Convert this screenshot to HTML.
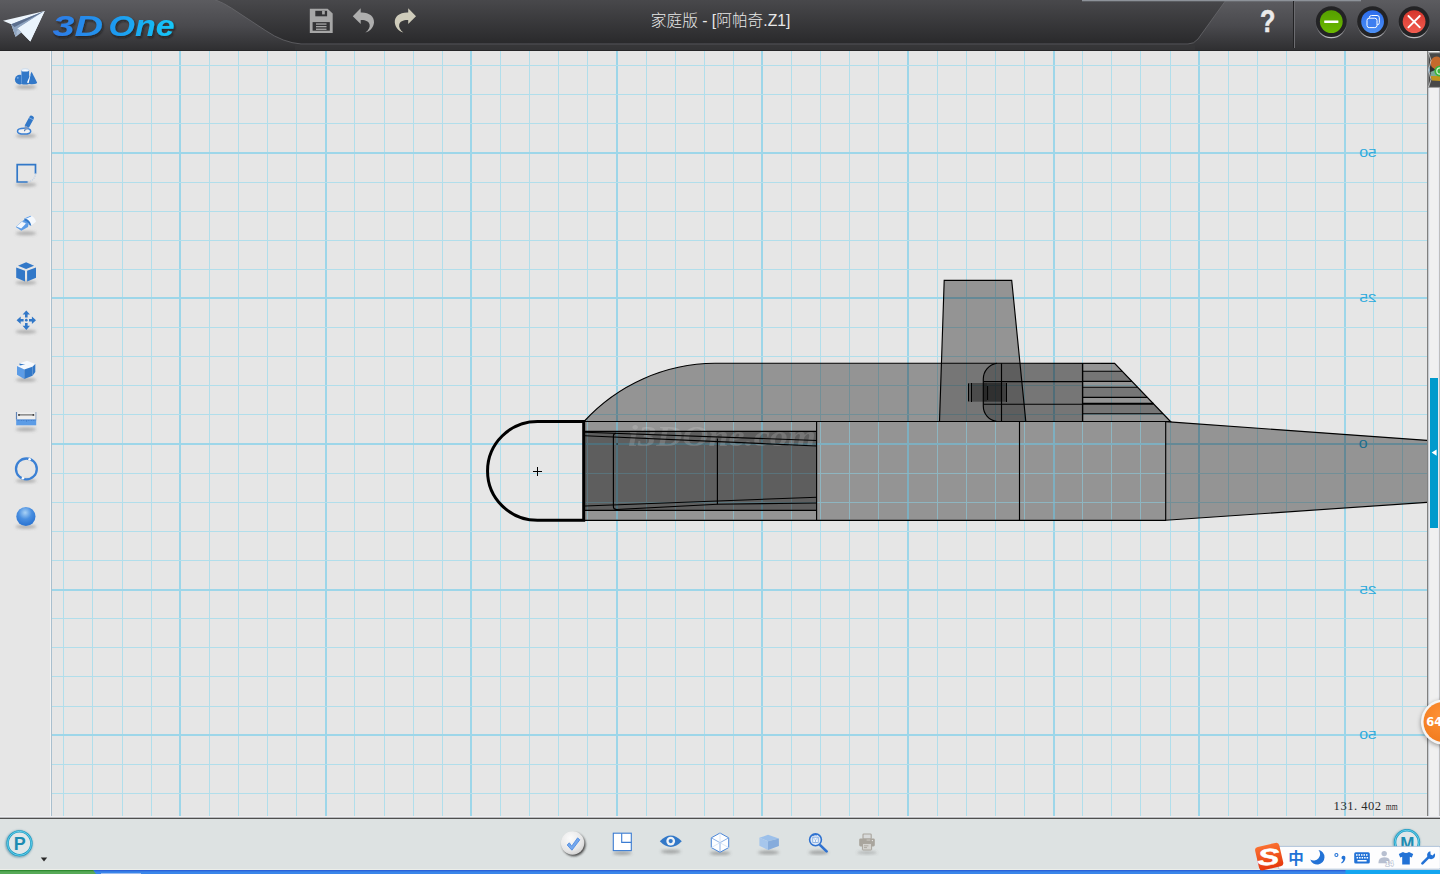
<!DOCTYPE html>
<html lang="zh">
<head>
<meta charset="utf-8">
<title>家庭版 - [阿帕奇.Z1]</title>
<style>
html,body{margin:0;padding:0;background:#e6e6e6;}
body{width:1440px;height:874px;overflow:hidden;position:relative;
font-family:"Liberation Sans","Noto Sans CJK SC",sans-serif;}
svg{position:absolute;left:0;top:0;display:block}
text{white-space:pre}
</style>
</head>
<body>
<svg width="1440" height="874" viewBox="0 0 1440 874">
<defs>
<linearGradient id="gTab" x1="0" y1="0" x2="0" y2="1">
 <stop offset="0" stop-color="#5c5c60"/><stop offset="0.5" stop-color="#4a4a4e"/><stop offset="1" stop-color="#2e2e30"/>
</linearGradient>
<linearGradient id="gMid" x1="0" y1="0" x2="0" y2="1">
 <stop offset="0" stop-color="#49494c"/><stop offset="1" stop-color="#29292b"/>
</linearGradient>
<linearGradient id="gLogo" gradientUnits="userSpaceOnUse" x1="53" y1="0" x2="175" y2="0">
 <stop offset="0" stop-color="#2f7be6"/><stop offset="0.5" stop-color="#1f9af0"/><stop offset="1" stop-color="#12c8f8"/>
</linearGradient>
<filter id="blur1" x="-50%" y="-50%" width="200%" height="200%"><feGaussianBlur stdDeviation="1"/></filter>
<filter id="blurW" x="-20%" y="-50%" width="140%" height="200%"><feGaussianBlur stdDeviation="0.7"/></filter>
<filter id="blur15" x="-50%" y="-50%" width="200%" height="200%"><feGaussianBlur stdDeviation="1.5"/></filter>
<filter id="blur2" x="-50%" y="-50%" width="200%" height="200%"><feGaussianBlur stdDeviation="2"/></filter>
<filter id="blur3" x="-50%" y="-50%" width="200%" height="200%"><feGaussianBlur stdDeviation="3"/></filter>
<clipPath id="clipCanvas"><rect x="52" y="51" width="1375" height="765"/></clipPath>
</defs>
<rect x="0" y="0" width="1440" height="874" fill="#e6e6e6"/>
<g clip-path="url(#clipCanvas)" shape-rendering="crispEdges">
<rect x="5" y="51" width="1" height="765" fill="#b1deeb"/>
<rect x="34" y="51" width="2" height="765" fill="#9dd6e9"/>
<rect x="63" y="51" width="1" height="765" fill="#b1deeb"/>
<rect x="92" y="51" width="1" height="765" fill="#b1deeb"/>
<rect x="122" y="51" width="1" height="765" fill="#b1deeb"/>
<rect x="151" y="51" width="1" height="765" fill="#b1deeb"/>
<rect x="179" y="51" width="2" height="765" fill="#9dd6e9"/>
<rect x="209" y="51" width="1" height="765" fill="#b1deeb"/>
<rect x="238" y="51" width="1" height="765" fill="#b1deeb"/>
<rect x="267" y="51" width="1" height="765" fill="#b1deeb"/>
<rect x="296" y="51" width="1" height="765" fill="#b1deeb"/>
<rect x="325" y="51" width="2" height="765" fill="#9dd6e9"/>
<rect x="354" y="51" width="1" height="765" fill="#b1deeb"/>
<rect x="384" y="51" width="1" height="765" fill="#b1deeb"/>
<rect x="413" y="51" width="1" height="765" fill="#b1deeb"/>
<rect x="442" y="51" width="1" height="765" fill="#b1deeb"/>
<rect x="470" y="51" width="2" height="765" fill="#9dd6e9"/>
<rect x="500" y="51" width="1" height="765" fill="#b1deeb"/>
<rect x="529" y="51" width="1" height="765" fill="#b1deeb"/>
<rect x="558" y="51" width="1" height="765" fill="#b1deeb"/>
<rect x="587" y="51" width="1" height="765" fill="#b1deeb"/>
<rect x="616" y="51" width="2" height="765" fill="#9dd6e9"/>
<rect x="646" y="51" width="1" height="765" fill="#b1deeb"/>
<rect x="675" y="51" width="1" height="765" fill="#b1deeb"/>
<rect x="704" y="51" width="1" height="765" fill="#b1deeb"/>
<rect x="733" y="51" width="1" height="765" fill="#b1deeb"/>
<rect x="761" y="51" width="2" height="765" fill="#9dd6e9"/>
<rect x="791" y="51" width="1" height="765" fill="#b1deeb"/>
<rect x="820" y="51" width="1" height="765" fill="#b1deeb"/>
<rect x="849" y="51" width="1" height="765" fill="#b1deeb"/>
<rect x="878" y="51" width="1" height="765" fill="#b1deeb"/>
<rect x="907" y="51" width="2" height="765" fill="#9dd6e9"/>
<rect x="937" y="51" width="1" height="765" fill="#b1deeb"/>
<rect x="966" y="51" width="1" height="765" fill="#b1deeb"/>
<rect x="995" y="51" width="1" height="765" fill="#b1deeb"/>
<rect x="1024" y="51" width="1" height="765" fill="#b1deeb"/>
<rect x="1053" y="51" width="2" height="765" fill="#9dd6e9"/>
<rect x="1082" y="51" width="1" height="765" fill="#b1deeb"/>
<rect x="1111" y="51" width="1" height="765" fill="#b1deeb"/>
<rect x="1140" y="51" width="1" height="765" fill="#b1deeb"/>
<rect x="1170" y="51" width="1" height="765" fill="#b1deeb"/>
<rect x="1198" y="51" width="2" height="765" fill="#9dd6e9"/>
<rect x="1228" y="51" width="1" height="765" fill="#b1deeb"/>
<rect x="1257" y="51" width="1" height="765" fill="#b1deeb"/>
<rect x="1286" y="51" width="1" height="765" fill="#b1deeb"/>
<rect x="1315" y="51" width="1" height="765" fill="#b1deeb"/>
<rect x="1344" y="51" width="2" height="765" fill="#9dd6e9"/>
<rect x="1373" y="51" width="1" height="765" fill="#b1deeb"/>
<rect x="1402" y="51" width="1" height="765" fill="#b1deeb"/>
<rect x="52" y="6" width="1375.5" height="2" fill="#9dd6e9"/>
<rect x="52" y="36" width="1375.5" height="1" fill="#b1deeb"/>
<rect x="52" y="65" width="1375.5" height="1" fill="#b1deeb"/>
<rect x="52" y="94" width="1375.5" height="1" fill="#b1deeb"/>
<rect x="52" y="123" width="1375.5" height="1" fill="#b1deeb"/>
<rect x="52" y="152" width="1375.5" height="2" fill="#9dd6e9"/>
<rect x="52" y="182" width="1375.5" height="1" fill="#b1deeb"/>
<rect x="52" y="211" width="1375.5" height="1" fill="#b1deeb"/>
<rect x="52" y="240" width="1375.5" height="1" fill="#b1deeb"/>
<rect x="52" y="269" width="1375.5" height="1" fill="#b1deeb"/>
<rect x="52" y="297" width="1375.5" height="2" fill="#9dd6e9"/>
<rect x="52" y="327" width="1375.5" height="1" fill="#b1deeb"/>
<rect x="52" y="356" width="1375.5" height="1" fill="#b1deeb"/>
<rect x="52" y="385" width="1375.5" height="1" fill="#b1deeb"/>
<rect x="52" y="414" width="1375.5" height="1" fill="#b1deeb"/>
<rect x="52" y="443" width="1375.5" height="2" fill="#9dd6e9"/>
<rect x="52" y="473" width="1375.5" height="1" fill="#b1deeb"/>
<rect x="52" y="502" width="1375.5" height="1" fill="#b1deeb"/>
<rect x="52" y="531" width="1375.5" height="1" fill="#b1deeb"/>
<rect x="52" y="560" width="1375.5" height="1" fill="#b1deeb"/>
<rect x="52" y="589" width="1375.5" height="2" fill="#9dd6e9"/>
<rect x="52" y="618" width="1375.5" height="1" fill="#b1deeb"/>
<rect x="52" y="647" width="1375.5" height="1" fill="#b1deeb"/>
<rect x="52" y="676" width="1375.5" height="1" fill="#b1deeb"/>
<rect x="52" y="706" width="1375.5" height="1" fill="#b1deeb"/>
<rect x="52" y="734" width="1375.5" height="2" fill="#9dd6e9"/>
<rect x="52" y="764" width="1375.5" height="1" fill="#b1deeb"/>
<rect x="52" y="793" width="1375.5" height="1" fill="#b1deeb"/>
</g>
<text transform="translate(1376.6,157) scale(-1.27,0.9)" x="0" y="0" font-family="'Liberation Sans',sans-serif" font-size="12.3" fill="#2aa9dc">50</text>
<text transform="translate(1376.6,302.1) scale(-1.27,0.9)" x="0" y="0" font-family="'Liberation Sans',sans-serif" font-size="12.3" fill="#2aa9dc">25</text>
<text transform="translate(1367.6,448) scale(-1.27,0.9)" x="0" y="0" font-family="'Liberation Sans',sans-serif" font-size="12.3" fill="#2aa9dc">0</text>
<text transform="translate(1376.6,594) scale(-1.27,0.9)" x="0" y="0" font-family="'Liberation Sans',sans-serif" font-size="12.3" fill="#2aa9dc">25</text>
<text transform="translate(1376.6,739.1) scale(-1.27,0.9)" x="0" y="0" font-family="'Liberation Sans',sans-serif" font-size="12.3" fill="#2aa9dc">50</text>
<g clip-path="url(#clipCanvas)">
<path d="M584,421.5 A179,179 0 0 1 715,363.3 L1114.6,363.3 L1170.5,421.5 Z" fill="#000" fill-opacity="0.357"/>
<polygon points="944.2,280.3 1011.7,280.3 1019.9,363.3 941.5,363.3" fill="#000" fill-opacity="0.357"/>
<polygon points="941.5,363.3 1019.9,363.3 1025.8,421.5 939.5,421.5" fill="#000" fill-opacity="0.2"/>
<path d="M997,363.3 C989,364.5 983.3,371 983.3,379 L983.3,406 C983.3,414 989,420.5 997,421.5 L1082.6,421.5 L1082.6,363.3 Z" fill="#000" fill-opacity="0.2"/>
<polygon points="1082.6,371.2 1122.2,371.2 1131.9,381.3 1082.6,381.3" fill="#000" fill-opacity="0.2"/>
<polygon points="1082.6,387.2 1137.6,387.2 1147.3,397.3 1082.6,397.3" fill="#000" fill-opacity="0.2"/>
<polygon points="1082.6,403.8 1153.5,403.8 1163.0,413.7 1082.6,413.7" fill="#000" fill-opacity="0.2"/>
<rect x="968.5" y="383" width="3" height="18.7" fill="#000" fill-opacity="0.277"/>
<rect x="971.5" y="383" width="11.9" height="18.7" fill="#000" fill-opacity="0.36"/>
<rect x="983.4" y="383" width="4.2" height="18.7" fill="#000" fill-opacity="0.558"/>
<rect x="987.6" y="383" width="13.9" height="18.7" fill="#000" fill-opacity="0.49"/>
<rect x="1001.5" y="383" width="5" height="18.7" fill="#000" fill-opacity="0.33"/>
<rect x="585" y="421.5" width="580.7" height="98.8" fill="#000" fill-opacity="0.357"/>
<g shape-rendering="crispEdges"><clipPath id="clipB"><rect x="585.5" y="422" width="579.7" height="97.8"/></clipPath><g clip-path="url(#clipB)">
<rect x="529" y="410" width="1" height="120" fill="#8eb5c0"/>
<rect x="558" y="410" width="1" height="120" fill="#8eb5c0"/>
<rect x="587" y="410" width="1" height="120" fill="#8eb5c0"/>
<rect x="616" y="410" width="2" height="120" fill="#7eafc0"/>
<rect x="646" y="410" width="1" height="120" fill="#8eb5c0"/>
<rect x="675" y="410" width="1" height="120" fill="#8eb5c0"/>
<rect x="704" y="410" width="1" height="120" fill="#8eb5c0"/>
<rect x="733" y="410" width="1" height="120" fill="#8eb5c0"/>
<rect x="761" y="410" width="2" height="120" fill="#7eafc0"/>
<rect x="791" y="410" width="1" height="120" fill="#8eb5c0"/>
<rect x="820" y="410" width="1" height="120" fill="#8eb5c0"/>
<rect x="849" y="410" width="1" height="120" fill="#8eb5c0"/>
<rect x="878" y="410" width="1" height="120" fill="#8eb5c0"/>
<rect x="907" y="410" width="2" height="120" fill="#7eafc0"/>
<rect x="937" y="410" width="1" height="120" fill="#8eb5c0"/>
<rect x="966" y="410" width="1" height="120" fill="#8eb5c0"/>
<rect x="995" y="410" width="1" height="120" fill="#8eb5c0"/>
<rect x="1024" y="410" width="1" height="120" fill="#8eb5c0"/>
<rect x="1053" y="410" width="2" height="120" fill="#7eafc0"/>
<rect x="1082" y="410" width="1" height="120" fill="#8eb5c0"/>
<rect x="1111" y="410" width="1" height="120" fill="#8eb5c0"/>
<rect x="1140" y="410" width="1" height="120" fill="#8eb5c0"/>
<rect x="1170" y="410" width="1" height="120" fill="#8eb5c0"/>
<rect x="570" y="356" width="610" height="1" fill="#8eb5c0"/>
<rect x="570" y="385" width="610" height="1" fill="#8eb5c0"/>
<rect x="570" y="414" width="610" height="1" fill="#8eb5c0"/>
<rect x="570" y="443" width="610" height="2" fill="#7eafc0"/>
<rect x="570" y="473" width="610" height="1" fill="#8eb5c0"/>
<rect x="570" y="502" width="610" height="1" fill="#8eb5c0"/>
<rect x="570" y="531" width="610" height="1" fill="#8eb5c0"/>
</g></g>
<rect x="585" y="431.3" width="231.6" height="79" fill="#000" fill-opacity="0.362"/>
<polygon points="1165.7,421.6 1428,440.37 1428,502.23 1165.7,520.3" fill="#000" fill-opacity="0.357"/>
<text x="628" y="446" font-family="'Liberation Serif',serif" font-style="italic" font-weight="bold" font-size="29" fill="#fff" fill-opacity="0.15" filter="url(#blurW)" textLength="188" lengthAdjust="spacingAndGlyphs">i3DOne.com</text>
<path d="M584,421.5 A179,179 0 0 1 715,363.3 L1114.6,363.3 L1170.5,421.5 Z" fill="none" stroke="#000" stroke-width="1.15"/>
<line x1="585" y1="421.5" x2="1170.5" y2="421.5" stroke="#000" stroke-width="1.15"/>
<line x1="585" y1="520.3" x2="1166" y2="520.3" stroke="#000" stroke-width="1.15"/>
<line x1="816.6" y1="421.5" x2="816.6" y2="520.3" stroke="#000" stroke-width="1.15"/>
<line x1="1019.5" y1="421.5" x2="1019.5" y2="520.3" stroke="#000" stroke-width="1.15"/>
<line x1="1165.7" y1="421.5" x2="1165.7" y2="520.3" stroke="#000" stroke-width="1.15"/>
<line x1="585" y1="431.3" x2="817" y2="431.3" stroke="#000" stroke-width="1.15"/>
<line x1="585" y1="510.3" x2="817" y2="510.3" stroke="#000" stroke-width="1.15"/>
<line x1="1165.7" y1="421.6" x2="1428" y2="440.37156525066973" stroke="#000" stroke-width="1.15"/>
<line x1="1165.7" y1="520.3" x2="1428" y2="502.23111366245695" stroke="#000" stroke-width="1.15"/>
<polyline points="939.5,421.5 944.2,280.3 1011.7,280.3 1025.8,421.5" fill="none" stroke="#000" stroke-width="1.15"/>
<path d="M997,363.3 C989,364.5 983.3,371 983.3,379 L983.3,406 C983.3,414 989,420.5 997,421.5" fill="none" stroke="#000" stroke-width="1.15"/>
<line x1="1001.5" y1="363.3" x2="1001.5" y2="421.5" stroke="#000" stroke-width="1.15"/>
<line x1="983.5" y1="381.6" x2="1082.6" y2="381.6" stroke="#000" stroke-width="1.15"/>
<line x1="983.5" y1="404.2" x2="1082.6" y2="404.2" stroke="#000" stroke-width="1.15"/>
<line x1="1082.6" y1="363.3" x2="1082.6" y2="421.5" stroke="#000" stroke-width="1.4"/>
<line x1="1082.6" y1="371.2" x2="1122.187800687285" y2="371.2" stroke="#000" stroke-width="1.15"/>
<line x1="1082.6" y1="381.3" x2="1131.8886597938144" y2="381.3" stroke="#000" stroke-width="1.15"/>
<line x1="1082.6" y1="387.2" x2="1137.5554982817869" y2="387.2" stroke="#000" stroke-width="1.15"/>
<line x1="1082.6" y1="397.3" x2="1147.256357388316" y2="397.3" stroke="#000" stroke-width="1.15"/>
<line x1="1082.6" y1="403.8" x2="1153.4994845360825" y2="403.8" stroke="#000" stroke-width="2"/>
<line x1="1082.6" y1="413.7" x2="1163.0082474226804" y2="413.7" stroke="#000" stroke-width="1.15"/>
<line x1="968.5" y1="383.4" x2="968.5" y2="401.4" stroke="#000" stroke-width="1.0"/>
<line x1="971.5" y1="383" x2="971.5" y2="402" stroke="#000" stroke-width="1.0"/>
<line x1="987.6" y1="386" x2="987.6" y2="400" stroke="#000" stroke-width="1.0"/>
<line x1="1006.5" y1="383" x2="1006.5" y2="402" stroke="#000" stroke-width="1.0"/>
<path d="M616,433.2 Q613.4,433.4 613.4,436 L613.4,506.6 Q613.4,509.6 616.5,509.4" fill="none" stroke="#000" stroke-width="1.15"/>
<line x1="585" y1="432.2" x2="817" y2="440.5" stroke="#000" stroke-width="1.15"/>
<line x1="585" y1="435.8" x2="817" y2="446" stroke="#000" stroke-width="1.15"/>
<line x1="585" y1="506" x2="817" y2="497.2" stroke="#000" stroke-width="1.15"/>
<polyline points="616,509.5 717.5,504.2 817,503" fill="none" stroke="#000" stroke-width="1.15"/>
<line x1="717.4" y1="438.5" x2="717.4" y2="504.2" stroke="#000" stroke-width="1.15"/>
<rect x="616.6" y="443.4" width="1" height="1.2" fill="#000"/>
<path d="M583.7,421.5 L537.5,421.5 A50,49.4 0 0 0 537.5,520.3 L583.7,520.3 Z" fill="none" stroke="#000" stroke-width="3" stroke-linejoin="miter"/>
<rect x="533" y="471" width="9" height="1" fill="#000"/><rect x="537" y="467" width="1" height="9" fill="#000"/>
</g>
<rect x="1427" y="51" width="13" height="766" fill="#f0f0f0"/>
<rect x="1427" y="51" width="1" height="766" fill="#808080"/>
<rect x="1428" y="51" width="1" height="766" fill="#c8ccd0"/>
<rect x="1429" y="51" width="1" height="766" fill="#e9ebf0"/>
<rect x="1438" y="51" width="1" height="766" fill="#e9ebf0"/>
<rect x="1439" y="51" width="1" height="766" fill="#bebebe"/>
<rect x="1428.4" y="52.6" width="11.6" height="35" fill="#484848"/>
<path d="M1428.4,52.8 L1440,52.8 M1428.4,87.4 L1440,87.4" stroke="#a8a8a8" stroke-width="0.8"/>
<ellipse cx="1436.5" cy="63" rx="6" ry="6.5" fill="#c46a2c"/>
<path d="M1430,66 L1436,70 L1430,74 Z" fill="#303030"/>
<path d="M1430.5,72 L1440,68 L1440,77 L1431,76 Z" fill="#7aa898"/>
<path d="M1430.5,76 L1440,76 L1440,81 L1432,80.5 Z" fill="#c0941e"/>
<path d="M1428.6,66 L1430,70 L1428.6,74 Z" fill="#7ab4dc"/>
<circle cx="1440" cy="71" r="5.6" fill="#3cb43c"/><circle cx="1440" cy="71" r="3.2" fill="none" stroke="#d8f4d8" stroke-width="1.2"/>
<path d="M1428.6,53 L1431,60.5 L1428.6,70 L1431,79.5 L1428.6,87" fill="none" stroke="#e8e8e8" stroke-width="0.7"/>
<rect x="1430" y="378" width="8" height="150" fill="#009acc"/>
<path d="M1431.6,452.6 L1436.6,449.4 L1436.6,455.8 Z" fill="#fff"/>
<circle cx="1443.6" cy="723.5" r="23" fill="#000" fill-opacity="0.35" filter="url(#blur2)"/>
<circle cx="1443.5" cy="722" r="22.6" fill="#f4f4f4"/>
<radialGradient id="gOr" cx="0.45" cy="0.35" r="0.7"><stop offset="0" stop-color="#ff9136"/><stop offset="1" stop-color="#f07a1c"/></radialGradient>
<circle cx="1443.5" cy="722" r="20" fill="url(#gOr)"/>
<text x="1426.2" y="726.4" font-family="'DejaVu Sans','Liberation Sans',sans-serif" font-weight="bold" font-size="11.5" fill="#fff">64</text>
<text x="1333.6" y="810.4" font-family="'Liberation Serif','Noto Serif CJK SC',serif" font-size="12.6" fill="#2a2a2a" textLength="47.5" lengthAdjust="spacing">131. 402</text>
<text x="1385.8" y="810.2" font-family="'Liberation Serif','Noto Serif CJK SC',serif" font-size="9.5" fill="#2a2a2a" textLength="11.8" lengthAdjust="spacingAndGlyphs">mm</text>
<rect x="0" y="50" width="51" height="767" fill="#e6e6e6"/>
<rect x="50" y="51" width="1" height="765" fill="#f3f3f3"/>
<rect x="51" y="51" width="1" height="765" fill="#a9bfce"/>
<ellipse cx="26" cy="87" rx="10.5" ry="2.0" fill="#666" fill-opacity="0.42" filter="url(#blur15)"/>
<circle cx="19.8" cy="79.6" r="4.9" fill="#3278c8"/>
<circle cx="17.8" cy="77.8" r="0.9" fill="#7fb0ea"/>
<path d="M21.3,70.2 L21.3,83.2 A3.9,1.3 0 0 0 29.1,83.2 L29.1,70.2 Z" fill="#3278c8"/>
<ellipse cx="25.2" cy="70.2" rx="3.9" ry="1.35" fill="#fafcff" stroke="#9fc0e6" stroke-width="0.5"/>
<rect x="21.1" y="71" width="0.5" height="12.6" fill="#8db6e8"/>
<path d="M31.6,71.8 L37.1,82.6 A5.2,1.6 0 0 1 26.7,82.6 Z" fill="#3278c8"/>
<path d="M30.9,73.4 L27.0,82.4 L28.6,83.3 Z" fill="#fff"/>
<ellipse cx="26" cy="135.8" rx="10.5" ry="2.0" fill="#666" fill-opacity="0.42" filter="url(#blur15)"/>
<ellipse cx="24.1" cy="131.2" rx="6.6" ry="2.9" fill="#f2f2f2" stroke="#3b80d4" stroke-width="1.5"/>
<g transform="translate(24.1,131.6) rotate(28.5)"><path d="M0,0 L-2.2,-5.6 L2.2,-5.6 Z" fill="#7a98c2"/><path d="M-0.6,-1.6 L0,0 L0.6,-1.6Z" fill="#2f62a8"/><path d="M-2.4,-5.6 L-2.4,-15.6 Q-2.4,-17.8 0,-17.8 Q2.4,-17.8 2.4,-15.6 L2.4,-5.6 Z" fill="#3278c8"/><rect x="-2.4" y="-15" width="4.8" height="0.8" fill="#9cc0ec" fill-opacity="0.8"/></g>
<ellipse cx="26" cy="184.7" rx="10.5" ry="2.0" fill="#666" fill-opacity="0.42" filter="url(#blur15)"/>
<path d="M35.5,172.8 L35.5,164.6 L17.2,164.6 L17.2,182 L26.8,182" fill="none" stroke="#3278c8" stroke-width="1.7" stroke-linejoin="miter" stroke-linecap="square"/>
<path d="M35.5,173.4 A8.8,8.8 0 0 1 27,182" fill="none" stroke="#c4d2e4" stroke-width="1.3" stroke-dasharray="1.2,1"/>
<ellipse cx="26" cy="233.3" rx="10.5" ry="2.0" fill="#666" fill-opacity="0.42" filter="url(#blur15)"/>
<path d="M15.8,227.1 L21.6,221.4 L28.5,224 L28,227 L21.3,230.8 Z" fill="#5c9ce6"/>
<path d="M22,221.2 L24.6,219.6 L28.6,222.4 L28.5,224.4 Z" fill="#5c9ce6"/>
<path d="M16.4,226.6 L21.8,221.8 L26,223.6 L21.2,228.6 Z" fill="#f4f8fd"/>
<path d="M24.2,218.4 L30.5,215.8 C33.5,216.4 35.6,219 36,221.8 L31.2,225.6 C30.6,222 28.2,219.2 24.2,218.4 Z" fill="#f4f8fd"/>
<path d="M24.2,218.4 L30.5,215.8 L31.4,216.2 L26.6,218.6 Z" fill="#5c9ce6"/>
<path d="M24.2,218.4 C28.4,219 30.8,222 31.3,225.7 L29.6,225.2 C28.6,223 27,221.4 24.6,220.6 Z" fill="#3278c8"/>
<ellipse cx="26" cy="282.7" rx="10.5" ry="2.0" fill="#666" fill-opacity="0.42" filter="url(#blur15)"/>
<polygon points="26.1,262.2 34.1,265.8 26.1,268.9 18,265.8" fill="#3278c8"/>
<polygon points="16.2,267.5 25,270.8 25,281.4 16.2,277.7" fill="#3278c8"/>
<polygon points="27.1,270.8 36,267.5 36,277.7 27.1,281.4" fill="#3278c8"/>
<ellipse cx="26" cy="331.7" rx="10.5" ry="2.0" fill="#666" fill-opacity="0.42" filter="url(#blur15)"/>
<path d="M0,-9.7 L3.7,-5.6 L1.3,-5.6 L1.3,-2.7 L-1.3,-2.7 L-1.3,-5.6 L-3.7,-5.6 Z" transform="translate(26.3,320.2) rotate(0)" fill="#3278c8"/>
<path d="M0,-9.7 L3.7,-5.6 L1.3,-5.6 L1.3,-2.7 L-1.3,-2.7 L-1.3,-5.6 L-3.7,-5.6 Z" transform="translate(26.3,320.2) rotate(90)" fill="#3278c8"/>
<path d="M0,-9.7 L3.7,-5.6 L1.3,-5.6 L1.3,-2.7 L-1.3,-2.7 L-1.3,-5.6 L-3.7,-5.6 Z" transform="translate(26.3,320.2) rotate(180)" fill="#3278c8"/>
<path d="M0,-9.7 L3.7,-5.6 L1.3,-5.6 L1.3,-2.7 L-1.3,-2.7 L-1.3,-5.6 L-3.7,-5.6 Z" transform="translate(26.3,320.2) rotate(270)" fill="#3278c8"/>
<circle cx="26.3" cy="320.2" r="1.35" fill="#3278c8"/>
<ellipse cx="26" cy="379.8" rx="10.5" ry="2.0" fill="#666" fill-opacity="0.42" filter="url(#blur15)"/>
<polygon points="19.3,363.4 27,360.7 35.3,364 32.5,366.8 25.2,364.7" fill="#f6f9fd"/>
<polygon points="19.3,363.4 25.2,364.7 20,366.6" fill="#3278c8"/>
<polygon points="32.5,366.8 35.3,364 35.3,372 32.5,375.7" fill="#3278c8"/>
<polygon points="17,366.1 25.2,364.6 32.5,366.8 24.3,369.4" fill="#f6f9fd"/>
<polygon points="17,366.1 24.3,369.4 24.3,378.9 17,374.8" fill="#5c9ce6"/>
<polygon points="24.3,369.4 32.5,366.8 32.5,375.7 24.3,378.9" fill="#3278c8"/>
<ellipse cx="26" cy="429.3" rx="10.5" ry="2.0" fill="#666" fill-opacity="0.42" filter="url(#blur15)"/>
<rect x="16.6" y="412.6" width="19.2" height="7.2" fill="#efefef"/>
<rect x="15.9" y="412" width="1.2" height="7.6" fill="#5f84b6"/>
<rect x="35.2" y="412" width="1.4" height="7.6" fill="#aab9cd"/>
<rect x="18.4" y="414.4" width="15.6" height="1.0" fill="#555"/><circle cx="19" cy="414.9" r="0.95" fill="#3c3c3c"/><circle cx="33.4" cy="414.9" r="0.95" fill="#3c3c3c"/>
<rect x="16.2" y="419.6" width="20" height="5.7" fill="#5c9ce6"/>
<rect x="16.2" y="419.6" width="20" height="0.8" fill="#4a86d2"/>
<rect x="18.5" y="420" width="0.6" height="1" fill="#3e78c4"/>
<rect x="21" y="420" width="0.6" height="1" fill="#3e78c4"/>
<rect x="23.5" y="420" width="0.6" height="1" fill="#3e78c4"/>
<rect x="28.5" y="420" width="0.6" height="1" fill="#3e78c4"/>
<rect x="31" y="420" width="0.6" height="1" fill="#3e78c4"/>
<rect x="33.5" y="420" width="0.6" height="1" fill="#3e78c4"/>
<rect x="26" y="420" width="0.7" height="1.8" fill="#3e78c4"/>
<ellipse cx="26" cy="480.8" rx="10.5" ry="2.0" fill="#666" fill-opacity="0.42" filter="url(#blur15)"/>
<circle cx="26.4" cy="468.9" r="10.4" fill="none" stroke="#3b80d4" stroke-width="2.3"/>
<circle cx="29.6" cy="459.3" r="1.3" fill="#fff"/><circle cx="22.9" cy="478.3" r="1.3" fill="#fff"/>
<ellipse cx="26" cy="526.7" rx="10.5" ry="2.0" fill="#666" fill-opacity="0.42" filter="url(#blur15)"/>
<radialGradient id="gSph" cx="0.46" cy="0.3" r="0.62"><stop offset="0" stop-color="#a9d2f6"/><stop offset="0.55" stop-color="#4a8fe0"/><stop offset="1" stop-color="#2f78d4"/></radialGradient>
<circle cx="25.9" cy="516.5" r="9.6" fill="url(#gSph)"/>
<rect x="0" y="0" width="1440" height="51" fill="url(#gTab)"/>
<path d="M213.5,-1 Q224,3 231.5,8.1 L265.8,30.7 Q283,42.5 301,44 L1188,44 Q1194,44 1198,39 L1226,0 Z" fill="url(#gMid)"/>
<path d="M213.5,-1 Q224,3 231.5,8.1 L265.8,30.7 Q283,42.5 301,44 L1188,44 Q1194,44 1198,39 L1226,0" fill="none" stroke="#6a6a6e" stroke-width="1" stroke-opacity="0.75"/>
<rect x="295" y="44.5" width="900" height="6" fill="#38383a" fill-opacity="0.55"/>
<rect x="0" y="50" width="1440" height="1" fill="#262628"/>
<rect x="1082" y="0" width="279" height="1.3" fill="#8d9299"/>
<path d="M3,20.8 L44.7,11.1 L30.3,41.6 L17.6,28.6 L15.6,37 L11.2,24.2 Z" fill="#eef6fd"/>
<path d="M11.2,24.2 L44.7,11.1 L17.6,28.6 L15.6,37 Z" fill="#8ea4c0"/>
<path d="M11.2,24.2 L44.7,11.1 L14.6,27 Z" fill="#5c6f8e"/>
<path d="M17.6,28.6 L44.7,11.1 L30.3,41.6 Z" fill="#eaf4fd"/>
<path d="M15.6,37 L17.6,28.6 L21.4,32.4 Z" fill="#a9bcd4"/>
<filter id="logoSh" x="-10%" y="-20%" width="125%" height="150%"><feDropShadow dx="1.2" dy="1.8" stdDeviation="0.9" flood-color="#121214" flood-opacity="0.65"/></filter>
<g fill="url(#gLogo)" filter="url(#logoSh)"><text x="52.6" y="36.2" font-family="'Liberation Sans',sans-serif" font-weight="bold" font-style="italic" font-size="28.8" textLength="50.5" lengthAdjust="spacingAndGlyphs">3D</text><text x="108.6" y="36.2" font-family="'Liberation Sans',sans-serif" font-weight="bold" font-style="italic" font-size="28.8" textLength="66" lengthAdjust="spacingAndGlyphs">One</text></g>
<path d="M309.8,8.8 L327.6,8.8 L332.7,13.6 L332.7,33 L309.8,33 Z" fill="#a7a7a7"/>
<rect x="315.3" y="10.8" width="11.8" height="5.5" fill="#343436"/><rect x="322.1" y="10.8" width="2.7" height="3.6" fill="#a7a7a7"/>
<rect x="312.6" y="22.1" width="17.2" height="8.6" fill="#343436"/>
<rect x="316" y="23.4" width="10.5" height="1.3" fill="#a7a7a7"/>
<rect x="316" y="26.0" width="10.5" height="1.3" fill="#a7a7a7"/>
<rect x="316" y="28.6" width="10.5" height="1.3" fill="#a7a7a7"/>
<path d="M352.8,16.2 L360.7,8.3 L360.7,12.6 C369,12.2 374.4,16.6 374,22.6 C373.6,27.6 369.8,31.4 365.4,32.6 C368.6,30 370.2,27 369.6,24.4 C368.8,21.4 365.6,19.8 360.7,20 L360.7,24 Z" fill="#aeaeae"/>
<path d="M416,16.2 L408.2,8.3 L408.2,12.6 C399.8,12.2 394.4,16.6 394.8,22.6 C395.2,27.6 399,31.4 403.4,32.6 C400.2,30 398.6,27 399.2,24.4 C400,21.4 403.2,19.8 408.2,20 L408.2,24 Z" fill="#cfccbb"/>
<text x="720.6" y="25.9" text-anchor="middle" font-size="15.7" font-weight="300" fill="#e8e8e8" font-family="'Liberation Sans','Noto Sans CJK SC',sans-serif">家庭版 - [阿帕奇.Z1]</text>
<text transform="translate(1267.8,32.2) scale(0.8,1)" x="0" y="0" text-anchor="middle" font-size="31.5" font-weight="bold" fill="#ebebeb" stroke="#ebebeb" stroke-width="0.5" font-family="'Liberation Sans',sans-serif">?</text>
<rect x="1293" y="1" width="1" height="47" fill="#222224"/><rect x="1294" y="1" width="1" height="47" fill="#6c6c70"/>
<linearGradient id="gRingHi" x1="0" y1="0" x2="0" y2="1"><stop offset="0.45" stop-color="#55555a" stop-opacity="0.2"/><stop offset="1" stop-color="#c4c4c8"/></linearGradient>
<linearGradient id="gBtnG" x1="0" y1="0" x2="0" y2="1"><stop offset="0" stop-color="#559f00"/><stop offset="1" stop-color="#6bb800"/></linearGradient><circle cx="1331.3" cy="22.6" r="15.6" fill="url(#gRingHi)"/><circle cx="1331.3" cy="21.6" r="15.4" fill="#232325"/><circle cx="1331.3" cy="21.6" r="11.4" fill="url(#gBtnG)"/><rect x="1324.2" y="20.4" width="14.2" height="2.6" rx="0.4" fill="#fff"/>
<linearGradient id="gBtnB" x1="0" y1="0" x2="0" y2="1"><stop offset="0" stop-color="#2c6cec"/><stop offset="1" stop-color="#4c90f6"/></linearGradient><circle cx="1372.6" cy="22.6" r="15.6" fill="url(#gRingHi)"/><circle cx="1372.6" cy="21.6" r="15.4" fill="#232325"/><circle cx="1372.6" cy="21.6" r="11.4" fill="url(#gBtnB)"/><rect x="1369.3" y="15.5" width="10" height="9.4" rx="2.2" fill="none" stroke="#fff" stroke-width="1"/><rect x="1367" y="18.2" width="10" height="9.4" rx="2.2" fill="#3d7ef0" stroke="#fff" stroke-width="1"/>
<linearGradient id="gBtnR" x1="0" y1="0" x2="0" y2="1"><stop offset="0" stop-color="#d6362c"/><stop offset="1" stop-color="#f25c50"/></linearGradient><circle cx="1414.1" cy="22.6" r="15.6" fill="url(#gRingHi)"/><circle cx="1414.1" cy="21.6" r="15.4" fill="#232325"/><circle cx="1414.1" cy="21.6" r="11.4" fill="url(#gBtnR)"/><path d="M1408.4,16 L1419.8,27.4 M1419.8,16 L1408.4,27.4" stroke="#fff" stroke-width="1.8" stroke-linecap="round"/>
<rect x="0" y="816" width="1440" height="58" fill="#dde2e2"/>
<rect x="0" y="816" width="1440" height="1.8" fill="#eeeef2"/>
<rect x="0" y="817.7" width="1440" height="1.25" fill="#484848"/>
<rect x="0" y="869" width="1440" height="1" fill="#eceee9"/>
<rect x="0" y="870" width="1440" height="4" fill="#3a86ea"/>
<rect x="0" y="870" width="1440" height="1.3" fill="#2a62d8"/>
<path d="M0,870 L93,870 L96,874 L0,874 Z" fill="#58aa58"/>
<path d="M0,870 L93,870 L94,871.3 L0,871.3 Z" fill="#2e8a30"/>
<rect x="101" y="873" width="40" height="1" fill="#9dbdf0"/>
<rect x="1345.5" y="870" width="95" height="4" fill="#14a6f0"/>
<circle cx="19.0" cy="843.9" r="12.2" fill="none" stroke="#0f5f80" stroke-opacity="0.55" stroke-width="2.4" filter="url(#blur1)"/><circle cx="19.5" cy="843.3" r="11.9" fill="#e0e7e9" stroke="#1f9cc4" stroke-width="2.4"/><circle cx="19.5" cy="843.3" r="12" fill="none" stroke="#74dcf4" stroke-width="0.8"/><text x="19.8" y="849.8499999999999" text-anchor="middle" font-family="'Liberation Sans',sans-serif" font-weight="bold" font-size="17.9" fill="#1c8cb2">P</text>
<path d="M40.8,857.4 L47.2,857.4 L44,861.4 Z" fill="#2a2a2a"/>
<circle cx="1406.5" cy="842.8000000000001" r="12.2" fill="none" stroke="#0f5f80" stroke-opacity="0.55" stroke-width="2.4" filter="url(#blur1)"/><circle cx="1407" cy="842.2" r="11.9" fill="#e0e7e9" stroke="#1f9cc4" stroke-width="2.4"/><circle cx="1407" cy="842.2" r="12" fill="none" stroke="#74dcf4" stroke-width="0.8"/><text x="1407.3" y="848.75" text-anchor="middle" font-family="'Liberation Sans',sans-serif" font-weight="bold" font-size="17" fill="#1c8cb2">M</text>
<radialGradient id="gChk" cx="0.4" cy="0.3" r="0.75"><stop offset="0" stop-color="#fbfbfb"/><stop offset="0.7" stop-color="#e6e6e6"/><stop offset="1" stop-color="#cfcfcf"/></radialGradient>
<circle cx="573.9" cy="844.6" r="11.6" fill="#333" fill-opacity="0.9" filter="url(#blur1)"/>
<circle cx="572.6" cy="843" r="11.7" fill="url(#gChk)"/>
<path d="M567.2,845 L569.3,842.8 L571.7,846.2 L577.6,837.9 L579.8,839.8 L571.9,850.2 Z" fill="#74a8ee" stroke="#4f8be0" stroke-width="0.9" stroke-linejoin="round"/>
<ellipse cx="622.3" cy="853.2" rx="9.5" ry="1.6" fill="#555" fill-opacity="0.5" filter="url(#blur15)"/>
<rect x="613.3" y="833.2" width="18" height="17.4" fill="#fff" stroke="#3b7cd2" stroke-width="1.1"/>
<path d="M621.7,833.2 L621.7,842.4 L631.3,842.4" fill="none" stroke="#3b7cd2" stroke-width="1.1"/>
<ellipse cx="670.8" cy="851.6" rx="10" ry="1.8" fill="#555" fill-opacity="0.45" filter="url(#blur15)"/>
<path d="M659.8,841.2 Q670.8,829.6 681.8,841.2 Q670.8,852.6 659.8,841.2 Z" fill="#3278c8"/>
<circle cx="670.7" cy="841.1" r="4.4" fill="#eef2f6"/><circle cx="670.7" cy="841.1" r="2.1" fill="#3278c8"/>
<ellipse cx="720" cy="853.2" rx="10.5" ry="1.8" fill="#555" fill-opacity="0.45" filter="url(#blur15)"/>
<polygon points="720,833 728.7,837.8 728.7,847.6 720,852.3 711.3,847.6 711.3,837.8" fill="#fdfeff" stroke="#4a86d8" stroke-width="1"/>
<path d="M720,842.7 L720,852.3 M720,842.7 L711.3,837.8 M720,842.7 L728.7,837.8" stroke="#7fa8e2" stroke-width="0.9" fill="none"/>
<path d="M720,842.7 L720,833 M720,842.7 L711.3,847.6 M720,842.7 L728.7,847.6" stroke="#cfdff4" stroke-width="0.8" fill="none"/>
<ellipse cx="768.5" cy="852.4" rx="10.5" ry="1.8" fill="#555" fill-opacity="0.45" filter="url(#blur15)"/>
<polygon points="759.4,837.8 768,834.8 778.9,838.5 768,841.2" fill="#9cc0ea"/>
<polygon points="759.4,837.8 768,841.2 768,850.1 759.4,845.7" fill="#a6c6ec"/>
<polygon points="768,841.2 778.9,838.5 778.9,846.1 768,850.1" fill="#86acdc"/>
<ellipse cx="818.5" cy="852.4" rx="10" ry="1.8" fill="#555" fill-opacity="0.45" filter="url(#blur15)"/>
<circle cx="815.5" cy="839.8" r="5.9" fill="#dfe9f6" stroke="#2f72d0" stroke-width="1.6"/>
<rect x="812.8" y="837.2" width="5.4" height="5.2" fill="#f4f8fc" stroke="#6f9ede" stroke-width="0.7"/>
<path d="M813.4,838 L815.5,840 L817.6,838 M815.5,840 L815.5,842" stroke="#6f9ede" stroke-width="0.6" fill="none"/>
<path d="M812.4,835.6 A5,5 0 0 1 817,834.9" stroke="#2f72d0" stroke-width="1.4" fill="none"/>
<path d="M820.4,845.4 L826.6,851.4" stroke="#2f72d0" stroke-width="2.7" stroke-linecap="round"/>
<ellipse cx="867" cy="852.6" rx="10" ry="1.7" fill="#555" fill-opacity="0.32" filter="url(#blur15)"/>
<rect x="863" y="834" width="8.2" height="5" fill="#d8dada" stroke="#a9a59d" stroke-width="1.1" rx="0.8"/>
<rect x="859.2" y="838.4" width="15.6" height="8" rx="1.4" fill="#a9a59d"/>
<rect x="862.4" y="843.4" width="9.2" height="6.6" fill="#d4d3cf" stroke="#a9a59d" stroke-width="1" rx="0.6"/>
<rect x="864" y="845.4" width="4.4" height="0.9" fill="#a9a59d"/><rect x="864" y="847.2" width="3" height="0.9" fill="#a9a59d"/>
<circle cx="872.4" cy="840.6" r="0.7" fill="#e8e8e4"/><rect x="866.6" y="839.6" width="3.6" height="0.9" fill="#d0cec8"/>
<rect x="1278.4" y="846.4" width="162" height="22.8" rx="1.5" fill="#fdfdfe" stroke="#a9c0d8" stroke-width="0.9"/>
<linearGradient id="gSg" x1="0" y1="0" x2="0" y2="1"><stop offset="0" stop-color="#fa7030"/><stop offset="1" stop-color="#e6380e"/></linearGradient>
<g transform="translate(1269.2,856.6) rotate(-13)"><rect x="-12.4" y="-12" width="24.8" height="24" rx="3.4" fill="url(#gSg)"/><text x="-0.6" y="8.3" text-anchor="middle" font-family="'Liberation Sans',sans-serif" font-weight="bold" font-style="italic" font-size="23" fill="#fff" stroke="#fff" stroke-width="0.5" transform="rotate(11) scale(1.42,1)">S</text></g>
<text x="1295.9" y="863.6" text-anchor="middle" font-family="'Noto Sans CJK SC',sans-serif" font-weight="bold" font-size="15.5" fill="#2272d6">中</text>
<path d="M1318.5,850 A7.3,7.3 0 1 1 1310.25,859.4 A6.3,6.3 0 0 0 1318.5,850 Z" fill="#2272d6"/>
<circle cx="1336.4" cy="855" r="1.5" fill="none" stroke="#2272d6" stroke-width="1.1"/>
<path d="M1343.6,855.8 A1.8,1.8 0 0 1 1345.4,857.8 Q1345.4,861.6 1341.6,863.6 L1341.2,862.6 Q1343,861.4 1343.2,859.6 A1.9,1.9 0 0 1 1343.6,855.8 Z" fill="#2272d6"/>
<rect x="1354.2" y="852.3" width="15.6" height="11.2" rx="1.6" fill="#2272d6"/>
<rect x="1356.0" y="854.2" width="1.5" height="1.5" fill="#fff"/>
<rect x="1358.5" y="854.2" width="1.5" height="1.5" fill="#fff"/>
<rect x="1361.0" y="854.2" width="1.5" height="1.5" fill="#fff"/>
<rect x="1363.5" y="854.2" width="1.5" height="1.5" fill="#fff"/>
<rect x="1366.0" y="854.2" width="1.5" height="1.5" fill="#fff"/>
<rect x="1356.6" y="857" width="1.5" height="1.5" fill="#fff"/>
<rect x="1359.1" y="857" width="1.5" height="1.5" fill="#fff"/>
<rect x="1361.6" y="857" width="1.5" height="1.5" fill="#fff"/>
<rect x="1364.1" y="857" width="1.5" height="1.5" fill="#fff"/>
<rect x="1366.6" y="857" width="1.5" height="1.5" fill="#fff"/>
<rect x="1357.4" y="860" width="9.2" height="1.5" fill="#fff"/>
<circle cx="1384.2" cy="853.6" r="2.7" fill="#b7bfd0"/>
<path d="M1378.4,863.2 Q1378.2,857.2 1384.2,857.2 Q1389,857.2 1389.6,860 L1389.6,863.2 Z" fill="#b7bfd0"/>
<text x="1385.2" y="865.6" font-family="'Liberation Sans',sans-serif" font-weight="bold" font-size="7.5" fill="#fff" stroke="#aab3c6" stroke-width="0.9" paint-order="stroke">14</text>
<path d="M1403,852 Q1406,854.2 1409,852 L1413.2,854 L1411.8,857.6 L1409.8,856.8 L1409.8,864.6 L1402.2,864.6 L1402.2,856.8 L1400.2,857.6 L1398.8,854 Z" fill="#2272d6"/>
<path d="M1422.4,863.4 L1429.4,856.4" stroke="#2272d6" stroke-width="2.6" stroke-linecap="round"/>
<path d="M1434.6,853.2 A4,4 0 1 1 1430.4,851.2 L1430.6,854.6 L1432.6,855.6 Z" fill="#2272d6"/>
</svg>
</body>
</html>
